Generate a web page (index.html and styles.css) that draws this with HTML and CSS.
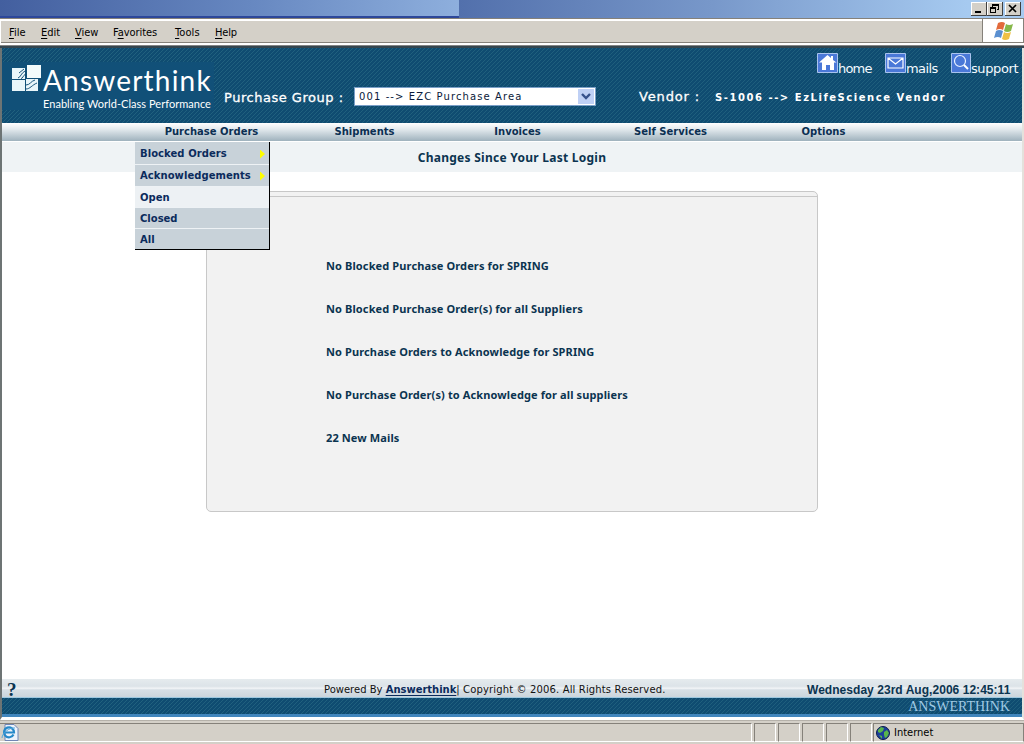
FILE: index.html
```html
<!DOCTYPE html>
<html lang="en">
<head>
<meta charset="utf-8">
<title>Answerthink</title>
<link rel="stylesheet" href="styles.css">
</head>
<body>
<div class="window">
  <div class="titlebar">
    <div class="title-left"></div>
    <div class="title-right">
      <svg class="winbtn" viewBox="0 0 16 14"><path class="btn-face" d="M0 0h16v14H0z"/><path class="btn-hi" d="M0 13V0h15"/><path class="btn-lo" d="M15.5 0v13.5H0"/><path d="M4 9h6v2H4z"/></svg>
      <svg class="winbtn" viewBox="0 0 16 14"><path class="btn-face" d="M0 0h16v14H0z"/><path class="btn-hi" d="M0 13V0h15"/><path class="btn-lo" d="M15.5 0v13.5H0"/><path d="M5 2h7v6h-2V7h1V4H6v1H5zM3 5h6v6H3zm1 2v3h4V7z" fill-rule="evenodd"/></svg>
      <svg class="winbtn close" viewBox="0 0 16 14"><path class="btn-face" d="M0 0h16v14H0z"/><path class="btn-hi" d="M0 13V0h15"/><path class="btn-lo" d="M15.5 0v13.5H0"/><path d="M4 3l7 7M11 3l-7 7" stroke="#000" stroke-width="1.7"/></svg>
    </div>
  </div>
  <div class="menubar">
    <div class="menus">
      <span class="m-file"><u>F</u>ile</span><span class="m-edit"><u>E</u>dit</span><span class="m-view"><u>V</u>iew</span><span class="m-fav">F<u>a</u>vorites</span><span class="m-tools"><u>T</u>ools</span><span class="m-help"><u>H</u>elp</span>
    </div>
    <div class="flagbox">
      <svg width="21" height="20" viewBox="0 0 21 20"><path d="M5 2q4-2 7 0L10 9q-3-2-7 0z" fill="#e26a3c"/><path d="M13 3q3 2 7 0l-2 7q-4 2-7 0z" fill="#86b84a"/><path d="M3 10q3-2 7 0l-2 7q-3-2-7 0z" fill="#5a8fd0"/><path d="M11 11q3 2 7 0l-2 7q-4 2-7 0z" fill="#f0c044"/></svg>
    </div>
  </div>
  <div class="edge"></div>
  <div class="page">
    <header class="header hatch">
      <div class="brand">
        <svg class="mark" width="29" height="27" viewBox="0 0 29 27"><path d="M15 0h14v13H15z" fill="#f4fbfb"/><path d="M0 3h13v11H0zM0 15h13v11H0zM14 14h12v12H14z" fill="#e9f6fa"/><path d="M6 13c3-1 3-5 7-7M9 13.500c2 0 2-3 4-4M7 8l5-4M14 20c4 0 5-4 9-5M14 24c4 0 6-4 11-6" stroke="#17547a" fill="none"/></svg>
        <div class="brand-text"><div class="brand-name">Answerthink</div><div class="brand-tag">Enabling World-Class Performance</div></div>
      </div>
      <div class="group">
        <span class="group-label">Purchase Group :</span>
        <div class="select"><span>001 --&gt; EZC Purchase Area</span><svg width="16" height="15" viewBox="0 0 16 15"><path d="M0 0h16v15H0z" fill="#bfd0f5"/><path d="M4 5l4 4 4-4" fill="none" stroke="#36518c" stroke-width="2.4"/></svg></div>
      </div>
      <div class="right">
        <div class="tools">
          <a class="t-home"><svg width="21" height="20" viewBox="0 0 21 20"><path d="M.5.5h20v19H.5z" fill="#4a78d8" stroke="#a9c3ee"/><path d="M10.500 2L2 9.500h3V17h4v-5h4v5h4V9.500h2.500L16 7V3h-2v2z" fill="#fff"/></svg><span>home</span></a>
          <a class="t-mail"><svg width="21" height="20" viewBox="0 0 21 20"><path d="M.5.5h20v19H.5z" fill="#4a78d8" stroke="#a9c3ee"/><path d="M3 5h15v10H3zM3 5l7.500 6L18 5" fill="none" stroke="#fff" stroke-width="1.200"/></svg><span>mails</span></a>
          <a class="t-support"><svg width="20" height="20" viewBox="0 0 20 20"><path d="M.5.5h19v19H.5z" fill="#4a78d8" stroke="#a9c3ee"/><circle cx="9" cy="8" r="5.500" fill="none" stroke="#e9f2ff" stroke-width="1.200"/><path d="M13 12l4 4" stroke="#fff" stroke-width="2"/></svg><span>support</span></a>
        </div>
        <div class="vendor"><span class="vendor-label">Vendor :</span><span class="vendor-name">S-1006 --&gt; EzLifeScience Vendor</span></div>
      </div>
    </header>
    <nav class="nav">
      <div class="nav-item"><span>Purchase Orders</span>
        <div class="dropdown">
          <div class="dd tall">Blocked Orders<i class="arrow"></i></div>
          <div class="dd tall">Acknowledgements<i class="arrow"></i></div>
          <div class="dd open">Open</div>
          <div class="dd">Closed</div>
          <div class="dd last">All</div>
        </div>
      </div>
      <div class="nav-item">Shipments</div><div class="nav-item">Invoices</div><div class="nav-item">Self Services</div><div class="nav-item">Options</div>
    </nav>
    <div class="heading"><span>Changes Since Your Last Login</span></div>
    <main class="main">
      <section class="panel">
        <div class="panel-top"></div>
        <ul class="notices">
          <li>No Blocked Purchase Orders for SPRING</li>
          <li>No Blocked Purchase Order(s) for all Suppliers</li>
          <li>No Purchase Orders to Acknowledge for SPRING</li>
          <li>No Purchase Order(s) to Acknowledge for all suppliers</li>
          <li>22 New Mails</li>
        </ul>
      </section>
    </main>
    <footer>
      <div class="footer-info">
        <span class="help">?</span>
        <div class="copyright"><span>Powered By </span><a>Answerthink</a><span class="rights">| Copyright © 2006. All Rights Reserved.</span></div>
        <span class="date">Wednesday 23rd Aug,2006 12:45:11</span>
      </div>
      <div class="strip hatch"><span>ANSWERTHINK</span></div>
    </footer>
  </div>
  <div class="statusbar">
    <div class="status-main"><svg width="18" height="17" viewBox="0 0 18 17"><path d="M4 .5h9l4 4v12H4z" fill="#eef3fb" stroke="#7186b5"/><path d="M12.500 10.500A5 5 0 1 1 13 8.500H4" fill="none" stroke="#2789c9" stroke-width="2.200"/><path d="M1 14C1 9 9 3 14 4" fill="none" stroke="#55a8dc"/></svg></div>
    <div class="cell"></div><div class="cell"></div><div class="cell"></div><div class="cell"></div><div class="cell"></div>
    <div class="zone"><svg width="14" height="14" viewBox="0 0 14 14"><circle cx="7" cy="7" r="6.500" fill="#1c3f9c" stroke="#0b1a4a"/><path d="M2 4l3-3 3 1-1 3-3 2-2-1zM8 6l3-2 2 3-2 4-2 1-1-3zM3 9l3 1v3z" fill="#58b54b"/></svg><span>Internet</span></div>
  </div>
</div>
</body>
</html>
```
FILE: styles.css
```css
* { box-sizing: border-box; }
body { margin: 0; overflow: hidden; font-family: "DejaVu Sans", sans-serif; }
.window { width: 1024px; height: 744px; display: flex; flex-direction: column; background: #d4d0c8; white-space: nowrap; }
svg { display: block; flex: none; }

.titlebar { height: 18px; display: flex; flex: none; }
.title-left { width: 459px; background: linear-gradient(90deg, #435f9f, #6788c1 55%, #8eafdd); border-bottom: 2px solid #2c479a; }
.title-right { flex: 1; display: flex; justify-content: flex-end; padding: 2px 3px 0 0; background: linear-gradient(90deg, #5270ac, #7898ca 45%, #a6caf0 90%); }
.winbtn { width: 16px; height: 14px; }
.winbtn.close { margin-left: 2px; }
.btn-face { fill: #d4d0c8; }
.btn-hi { fill: none; stroke: #fff; stroke-width: 2; }
.btn-lo { fill: none; stroke: #404040; }

.menubar { height: 27px; flex: none; display: flex; border-top: 1px solid #85817a; border-bottom: 2px solid #fff; box-shadow: inset 0 2px #fff, inset 1px 0 #fff, inset 0 -1px #85817a; background: #d4d0c8; }
.menus { flex: 1; display: flex; padding: 1px 0 0 9px; font: 11px/26px "DejaVu Sans Condensed", "DejaVu Sans", sans-serif; color: #000; }
.menus u { text-underline-offset: 2px; }
.menus span { flex: none; }
.m-file { width: 32px; }
.m-edit { width: 34px; }
.m-view { width: 38px; }
.m-fav { width: 62px; letter-spacing: -.05px; }
.m-tools { width: 40px; letter-spacing: .1px; }
.m-help { letter-spacing: -.2px; }
.flagbox { width: 42px; display: flex; align-items: center; justify-content: center; background: #fff; border: 1px solid #85817a; border-width: 0 1px 1px; }
.edge { height: 3px; flex: none; background: linear-gradient(#858585 1px, #35464f 1px); }

.page { height: 672px; flex: none; display: flex; flex-direction: column; background: #fff; border-left: 2px solid #6d7474; border-right: 2px solid #e4e1dc; border-bottom: 3px solid #fff; }
.hatch { background: repeating-linear-gradient(135deg, #0f4c71 0 1.600px, #22627f 2.100px, #0f4c71 2.828px); }
.header { height: 75px; flex: none; display: flex; }
.brand { width: 222px; display: flex; padding: 17px 0 0 10px; background: linear-gradient(#115078, #115078) 0 14px / 212px 48px no-repeat; }
.brand-text { padding-left: 2px; }
.brand-name { height: 31px; font: 28px/31px Lato, sans-serif; color: #fff; letter-spacing: 1.2px; }
.brand-tag { padding-top: 1px; font: 11px/14px Lato, sans-serif; color: #fff; letter-spacing: .03px; }
.group { width: 415px; display: flex; align-items: flex-start; padding-top: 39px; }
.group-label { width: 130px; padding-top: 1px; font-size: 13px; line-height: 20px; color: #fff; letter-spacing: .52px; -webkit-text-stroke: .3px #fff; }
.select { width: 242px; height: 19px; display: flex; align-items: center; justify-content: space-between; padding: 0 1px 0 4px; background: #fff; border: 1px solid #7a9fc8; font-size: 10px; letter-spacing: 1.1px; color: #0a1a3a; }
.right { flex: 1; }
.tools { height: 37px; display: flex; padding: 5px 0 0 178px; font: 13px/17px "DejaVu Sans", sans-serif; color: #f4faff; }
.tools a { display: flex; flex: none; }
.tools span { padding-top: 7px; }
.t-home { width: 68px; letter-spacing: -.8px; }
.t-mail { width: 66px; letter-spacing: -.6px; }
.t-support { letter-spacing: -.4px; }
.vendor { display: flex; color: #fff; line-height: 24px; }
.vendor-label { width: 76px; font-size: 13px; letter-spacing: .85px; -webkit-text-stroke: .3px #fff; }
.vendor-name { padding-top: 1px; font-size: 10px; font-weight: 700; letter-spacing: 1.54px; }

.nav { height: 18px; flex: none; display: grid; grid-template-columns: repeat(5, 153px); padding-left: 133px; background: linear-gradient(#fff, #e2e9ed 35%, #9fb2bd); }
.nav-item { position: relative; text-align: center; font-size: 10px; font-weight: 700; line-height: 18px; color: #0b2f52; }
.dropdown { position: absolute; left: 0; top: 19px; width: 135px; height: 108px; padding-top: 1px; border-right: 1px solid #000; border-bottom: 1px solid #000; text-align: left; z-index: 2; background: #c8d2d9; color: #0b2b5c; }
.dd { height: 21px; display: flex; align-items: center; justify-content: space-between; padding: 1px 4px 0 5px; border-bottom: 1px solid #eef2f5; }
.dd.tall { height: 22px; letter-spacing: .06px; }
.dd.open { background: #edf1f4; padding-top: 2px; }
.dd.last { height: 20px; border-bottom: 0; }
.arrow { width: 5px; height: 9px; background: #ff0; clip-path: polygon(0 0, 100% 50%, 0 100%); }
.heading { height: 31px; flex: none; background: #eff3f5; border-top: 1px solid #fff; text-align: center; font: 700 12px/32px "Noto Sans", sans-serif; letter-spacing: .26px; color: #0b3450; }
.main { flex: 1; padding: 19px 0 0 204px; }
.panel { width: 612px; height: 321px; border: 1px solid #c8c8c8; border-radius: 5px; background: #f2f2f2; }
.panel-top { height: 5px; border-bottom: 1px solid #c8c8c8; }
.notices { margin: 0; padding: 47px 0 0 119px; list-style: none; font: 700 11px/43px "Noto Sans", sans-serif; letter-spacing: .12px; color: #0b3450; }

.footer-info { height: 18px; display: flex; background: linear-gradient(#e5ebee, #dce3e8 40%, #f1f4f6 52%, #d7dfe5 60%, #cbd5dc); line-height: 21px; }
.help { width: 322px; padding-left: 5px; font: 700 19px/22px "Liberation Serif", serif; color: #0b3450; }
.copyright { width: 483px; font-size: 10px; letter-spacing: .14px; color: #111; white-space: pre; }
.copyright a { font-weight: 700; letter-spacing: -.02px; color: #0b2b5c; text-decoration: underline; text-underline-offset: 2px; }
.copyright span:first-child { letter-spacing: 0; }
.date { font: 700 12px/23px "Liberation Sans", sans-serif; letter-spacing: .04px; color: #0b3450; }
.strip { height: 20px; display: flex; justify-content: flex-end; padding-right: 12px; border-top: 1px solid #9cc7df; border-bottom: 3px solid #4186bd; font: 14px/17px "Liberation Serif", serif; color: #9fc9e4; }

.statusbar { flex: 1; display: flex; padding: 2px 0; border-top: 1px solid #b5b1aa; background: linear-gradient(#d4d0c8 20px, #fff 20px 21px, #d4d0c8 21px); }
.status-main { width: 752px; padding-left: 1px; border-top: 1px solid #85817a; border-right: 1px solid #fff; }
.cell { width: 22px; height: 19px; margin-left: 2px; border: 1px solid #85817a; border-right-color: #fff; border-bottom-color: #fff; }
.zone { flex: 1; height: 19px; margin-left: 1px; display: flex; align-items: center; gap: 4px; padding-left: 2px; border: 1px solid #85817a; border-bottom-color: #fff; font: 11px/17px "DejaVu Sans Condensed", "DejaVu Sans", sans-serif; color: #000; }
```
